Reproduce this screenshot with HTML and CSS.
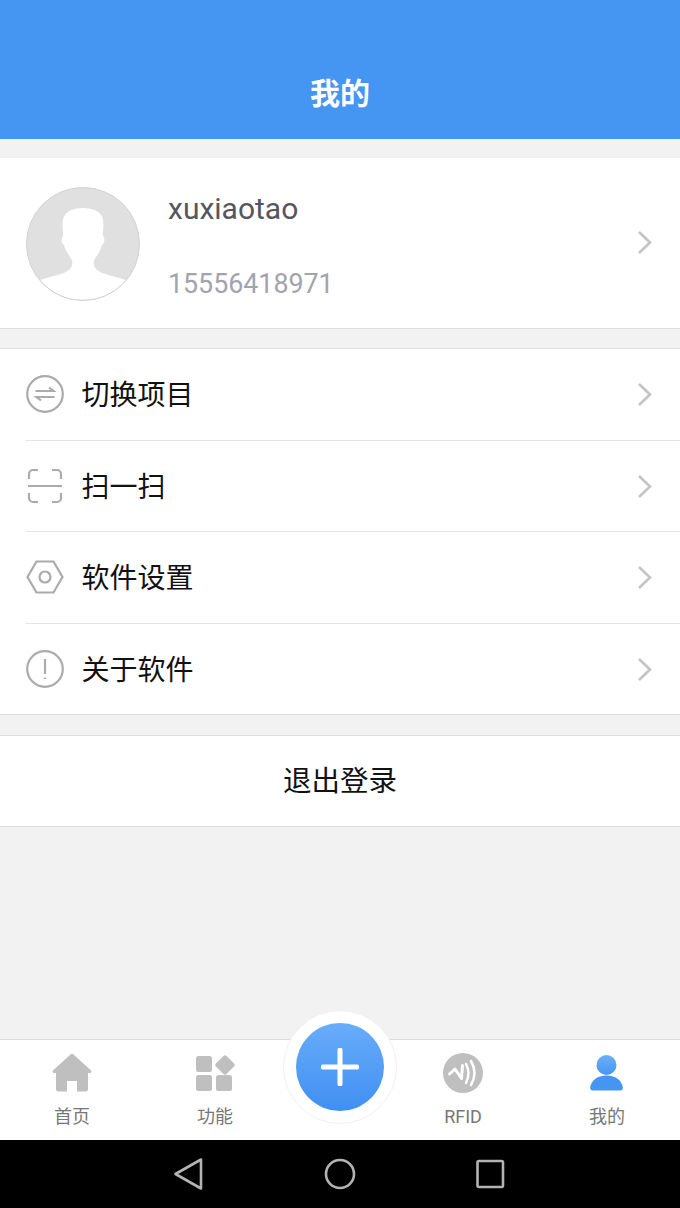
FILE: index.html
```html
<!DOCTYPE html>
<html lang="zh-CN">
<head>
    <meta charset="UTF-8">
    <title>我的</title>
    <link rel="stylesheet" href="styles.css">
</head>
<body>
    <div class="app">
        <header class="topbar">我的</header>

        <main class="content">
            <section class="profile group">
                <svg class="avatar" viewBox="0 0 114 114">
                    <circle cx="57" cy="57" r="56.5" fill="#e0e0e0"/>
                    <path d="M14 93C25 89 38 88 44 82C48 77 46 73 44 70C41 66 39 62 38 58C35 56 35 51 37 49C37 42 36 37 37 33C38 25 46 21 57 21C68 21 76 25 77 33C78 37 77 42 77 49C79 51 79 56 76 58C75 62 73 66 70 70C68 73 66 77 70 82C76 88 89 89 100 93A56.500 56.500 0 0 1 14 93Z" fill="#fff"/>
                    <circle cx="57" cy="57" r="56.5" fill="none" stroke="#d2d2d2"/>
                </svg>
                <div class="profile-text">
                    <div class="profile-name">xuxiaotao</div>
                    <div class="profile-phone">15556418971</div>
                </div>
                <svg class="chevron profile-chevron" viewBox="0 0 16 24"><path d="M2 2l11 10.500L2 23"/></svg>
            </section>

            <section class="menu group">
                <div class="menu-row">
                    <svg class="menu-icon" viewBox="0 0 38 38">
                        <circle cx="19" cy="19" r="17.800"/>
                        <path d="M9.500 16h18l-4.500-3.500M28.500 22h-18l4.500 3.500"/>
                    </svg>
                    <span class="menu-label">切换项目</span>
                    <svg class="chevron" viewBox="0 0 16 24"><path d="M2 2l11 10.500L2 23"/></svg>
                </div>
                <div class="menu-row">
                    <svg class="menu-icon" viewBox="0 0 38 38">
                        <path d="M3 12V7a4 4 0 0 1 4-4h5M26 3h5a4 4 0 0 1 4 4v5M3 26v5a4 4 0 0 0 4 4h5M26 35h5a4 4 0 0 0 4-4v-5M2 19h34"/>
                    </svg>
                    <span class="menu-label">扫一扫</span>
                    <svg class="chevron" viewBox="0 0 16 24"><path d="M2 2l11 10.500L2 23"/></svg>
                </div>
                <div class="menu-row">
                    <svg class="menu-icon" viewBox="0 0 38 38">
                        <path d="M10.500 3.500h17l9 15.500-9 15.500h-17L1.500 19z"/>
                        <circle cx="19" cy="19" r="5.500"/>
                    </svg>
                    <span class="menu-label">软件设置</span>
                    <svg class="chevron" viewBox="0 0 16 24"><path d="M2 2l11 10.500L2 23"/></svg>
                </div>
                <div class="menu-row">
                    <svg class="menu-icon" viewBox="0 0 38 38">
                        <circle cx="19" cy="19" r="17.800"/>
                        <path d="M19 9v15M19 27.500v1.500"/>
                    </svg>
                    <span class="menu-label">关于软件</span>
                    <svg class="chevron" viewBox="0 0 16 24"><path d="M2 2l11 10.500L2 23"/></svg>
                </div>
            </section>

            <section class="logout group">退出登录</section>
        </main>

        <nav class="tabbar">
            <div class="tab">
                <svg class="tab-icon" viewBox="0 0 40 40">
                    <path fill="#bfbfbf" d="M18.500 1.500a2.200 2.200 0 0 1 3 0L38.500 17c1.500 1.500 1 3-.5 3H36v16a2.500 2.500 0 0 1-2.500 2.500H25V28H15v10.500H6.500A2.500 2.500 0 0 1 4 36V20H2c-1.500 0-2-1.500-.5-3z"/>
                </svg>
                <span>首页</span>
            </div>
            <div class="tab">
                <svg class="tab-icon" viewBox="0 0 40 40">
                    <g fill="#bfbfbf">
                        <rect x="1" y="3" width="16" height="16" rx="2.500"/>
                        <rect x="1" y="22" width="16" height="16" rx="2.500"/>
                        <rect x="21" y="22" width="16" height="16" rx="2.500"/>
                        <rect x="22.500" y="4.500" width="15" height="15" rx="2.500" transform="rotate(45 30 12)"/>
                    </g>
                </svg>
                <span>功能</span>
            </div>
            <div class="tab-gap"></div>
            <div class="tab">
                <svg class="tab-icon" viewBox="0 0 40 40">
                    <circle cx="20" cy="20" r="20" fill="#bfbfbf"/>
                    <path d="M6.500 21l5.500-5 6.500 9.500 1-13" fill="none" stroke="#fff" stroke-width="3" stroke-linecap="round" stroke-linejoin="round"/>
                    <path d="M23 11q5 9 0 19M28 8q7 12 0 24" fill="none" stroke="#fff" stroke-width="2.500" stroke-linecap="round"/>
                </svg>
                <span>RFID</span>
            </div>
            <div class="tab">
                <svg class="tab-icon" viewBox="0 0 40 40">
                    <defs>
                        <linearGradient id="userFill" x1="0" y1="0" x2="0" y2="1">
                            <stop offset="0" stop-color="#6eb0fb"/>
                            <stop offset="1" stop-color="#4595f3"/>
                        </linearGradient>
                    </defs>
                    <circle cx="19.500" cy="12" r="10" fill="url(#userFill)"/>
                    <path d="M6 37.500c-2 0-3-1-2.800-3C4 28 10 22.500 19.500 22.500S35 28 35.800 34.500c.2 2-.8 3-2.800 3z" fill="#4595f3"/>
                </svg>
                <span>我的</span>
            </div>
            <div class="fab">
                <div class="fab-inner">
                    <svg viewBox="0 0 38 38"><path d="M19 2v34M2 19h34"/></svg>
                </div>
            </div>
        </nav>

        <footer class="sysbar">
            <svg class="sys-back" viewBox="0 0 30 34"><path d="M1.500 17L27 2.500v29z"/></svg>
            <svg class="sys-home" viewBox="0 0 32 32"><circle cx="16" cy="16" r="14"/></svg>
            <svg class="sys-recent" viewBox="0 0 30 30"><rect x="2.500" y="2" width="25.500" height="26" rx="1.500"/></svg>
        </footer>
    </div>
</body>
</html>
```

FILE: styles.css
```css
* {
    box-sizing: border-box;
}

html, body {
    margin: 0;
    padding: 0;
}

body {
    font-family: Roboto, "Noto Sans CJK SC", sans-serif;
    background: #f1f1f1;
}

.app {
    display: flex;
    flex-direction: column;
    width: 680px;
    height: 1208px;
    overflow: hidden;
}

.topbar {
    height: 139px;
    padding-top: 71px;
    background: #4595f3;
    color: #fff;
    font-size: 30px;
    font-weight: 700;
    line-height: 46px;
    text-align: center;
}

.content {
    flex: 1;
    padding-top: 19px;
    background: #f2f2f2;
}

.group {
    background: #fff;
    border-bottom: 1px solid #dedede;
}

.profile {
    display: flex;
    align-items: center;
    height: 171px;
    padding: 1px 27px 0 26px;
}

.avatar {
    width: 114px;
    height: 114px;
    flex-shrink: 0;
}

.profile-text {
    flex: 1;
    margin-left: 28px;
    padding-top: 5px;
}

.profile-name {
    color: #55555f;
    font-size: 30px;
    line-height: 40px;
}

.profile-phone {
    margin-top: 35px;
    color: #a3a3ad;
    font-size: 26.800px;
    line-height: 40px;
}

.chevron {
    width: 16px;
    height: 24px;
    fill: none;
    stroke: #c4c4c4;
    stroke-width: 2.600;
}

.profile-chevron {
    margin-bottom: 3px;
}

.menu {
    margin-top: 19px;
    border-top: 1px solid #dedede;
}

.menu-row {
    display: flex;
    align-items: center;
    height: 91.500px;
    margin-left: 26px;
    padding-right: 27px;
    border-bottom: 1px solid #e4e4e4;
}

.menu-row:last-child {
    height: 90.500px;
    border-bottom: none;
}

.menu-icon {
    width: 38px;
    height: 38px;
    flex-shrink: 0;
    fill: none;
    stroke: #ababab;
    stroke-width: 2.200;
}

.menu-label {
    flex: 1;
    margin-left: 17.500px;
    padding-top: 4px;
    color: #111;
    font-size: 28px;
    line-height: 40px;
}

.logout {
    height: 92px;
    margin-top: 20px;
    border-top: 1px solid #dedede;
    color: #111;
    font-size: 28.500px;
    line-height: 92px;
    text-align: center;
}

.tabbar {
    position: relative;
    display: grid;
    grid-template-columns: 144px 142px 106px 142px 146px;
    height: 101px;
    background: #fff;
    border-top: 1px solid #dcdcdc;
}

.tab {
    display: flex;
    flex-direction: column;
    align-items: center;
    padding-top: 13px;
    color: #777;
    font-size: 18px;
    line-height: 24px;
}

.tab-icon {
    width: 40px;
    height: 40px;
    margin-bottom: 12px;
}

.fab {
    position: absolute;
    top: -30px;
    left: 283px;
    display: flex;
    align-items: center;
    justify-content: center;
    width: 114px;
    height: 114px;
    background: #fff;
    border: 1px solid #f0f0f0;
    border-radius: 50%;
}

.fab-inner {
    display: flex;
    align-items: center;
    justify-content: center;
    width: 88px;
    height: 88px;
    border-radius: 50%;
    background: linear-gradient(#69acfb, #3f90f1);
}

.fab-inner svg {
    width: 38px;
    height: 38px;
    fill: none;
    stroke: #fff;
    stroke-width: 5;
    stroke-linecap: round;
}

.sysbar {
    display: flex;
    align-items: center;
    height: 68px;
    padding-left: 174px;
    background: #000;
}

.sysbar svg {
    fill: none;
    stroke: #b3b3b3;
    stroke-width: 2.600;
    stroke-linejoin: round;
}

.sys-back {
    width: 30px;
    height: 34px;
}

.sys-home {
    width: 32px;
    height: 32px;
    margin-left: 120px;
}

.sys-recent {
    width: 30px;
    height: 30px;
    margin-left: 119px;
}
```
